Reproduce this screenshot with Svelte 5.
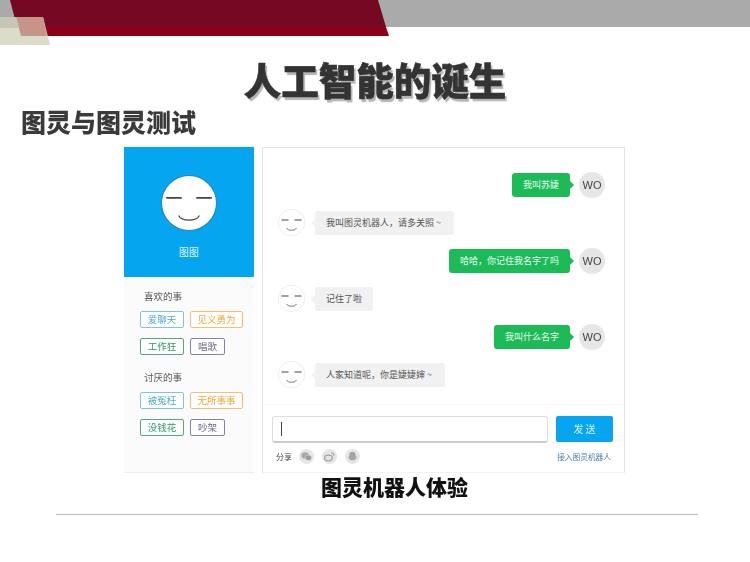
<script>
  const likes = [
    [["爱聊天", "blue"], ["见义勇为", "orange"]],
    [["工作狂", "green"], ["唱歌", "purple"]]
  ];
  const hates = [
    [["被冤枉", "blue"], ["无所事事", "orange"]],
    [["没钱花", "green"], ["吵架", "purple"]]
  ];
  const groups = [
    { title: "喜欢的事", rows: likes },
    { title: "讨厌的事", rows: hates }
  ];
  const messages = [
    { me: true, text: "我叫苏婕" },
    { me: false, text: "我叫图灵机器人，请多关照 ~\u2009" },
    { me: true, text: "哈哈，你记住我名字了吗" },
    { me: false, text: "记住了啦" },
    { me: true, text: "我叫什么名字" },
    { me: false, text: "人家知道呢，你是婕婕婶 ~\u2009" }
  ];
</script>

{#snippet face(size)}
  <svg class="face" width={size} height={size} viewBox="0 0 54 54">
    <circle cx="27" cy="27" r="26.5" fill="#fff" stroke="#ddd" />
    <path d="M7 22h14M33 22h14" stroke="#444" stroke-width="2.4" fill="none" />
    <path d="M17 38c3 6 17 6 20 0" stroke="#555" stroke-width="1.6" fill="none" />
  </svg>
{/snippet}

<div class="slide">
  <div class="banner">
    <svg width="750" height="46" viewBox="0 0 750 46">
      <rect width="750" height="27" fill="#aaaaaa" />
      <polygon points="10,0 378,0 386,27 17,27" fill="#750823" />
      <polygon points="17,27 386,27 389,36 21,36" fill="#8c0018" />
      <polygon points="0,17 43,17 50,45 0,45" fill="#dcdccb" />
      <polygon points="16,17 43,17 47,36 21,36" fill="#c4968a" />
      <polygon points="0,17 16,17 19,28 0,28" fill="#c6c6b4" />
    </svg>
  </div>

  <h1>人工智能的诞生</h1>
  <h2>图灵与图灵测试</h2>

  <div class="panel">
    <aside>
      <div class="profile">
        <svg class="bigface" width="56" height="56" viewBox="0 0 54 54">
          <circle cx="27" cy="27" r="26.5" fill="#fff" stroke="#1d84b8" />
          <path d="M5 22h15M34 22h15" stroke="#444" stroke-width="1.8" fill="none" />
          <path d="M17 39c3 6 17 6 20 0" stroke="#444" stroke-width="1.2" fill="none" />
        </svg>
        <span>图图</span>
      </div>
      <div class="groups">
        {#each groups as g}
          <div class="group">
            <div class="gtitle">{g.title}</div>
            {#each g.rows as row}
              <div class="tags">
                {#each row as t}
                  <span class="tag {t[1]}">{t[0]}</span>
                {/each}
              </div>
            {/each}
          </div>
        {/each}
      </div>
    </aside>

    <section class="chat">
      <div class="messages">
        {#each messages as m}
          {#if m.me}
            <div class="row me">
              <div class="bubble green">{m.text}</div>
              <div class="wo">WO</div>
            </div>
          {:else}
            <div class="row bot">
              {@render face(27)}
              <div class="bubble gray">{m.text}</div>
            </div>
          {/if}
        {/each}
      </div>
      <div class="composer">
        <div class="inputrow">
          <div class="input"><i></i></div>
          <button>发 送</button>
        </div>
        <div class="share">
          <span class="sharelabel">分享</span>
          <span class="icon">
            <svg width="15" height="15" viewBox="0 0 14 14">
              <circle cx="7" cy="7" r="7" fill="#e6e6e6" />
              <ellipse cx="5.7" cy="6" rx="3.5" ry="2.9" fill="#a9a9a9" />
              <ellipse cx="8.8" cy="8.2" rx="3" ry="2.5" fill="#9a9a9a" stroke="#e6e6e6" stroke-width=".5" />
            </svg>
          </span>
          <span class="icon">
            <svg width="15" height="15" viewBox="0 0 14 14">
              <circle cx="7" cy="7" r="7" fill="#e6e6e6" />
              <ellipse cx="6" cy="8.4" rx="3.6" ry="2.6" fill="none" stroke="#a4a4a4" stroke-width="1.2" />
              <path d="M8.6 3.8c1.6-.3 2.8 1 2.3 2.6" fill="none" stroke="#a4a4a4" stroke-width="1" />
            </svg>
          </span>
          <span class="icon">
            <svg width="15" height="15" viewBox="0 0 14 14">
              <circle cx="7" cy="7" r="7" fill="#e6e6e6" />
              <path d="M7 2.6c2 0 3 1.500 3 3.400l1 2.600-1 .3c-.3.900-.7 1.200-1 1.500H5c-.3-.3-.7-.6-1-1.500l-1-.3L4 6c0-1.900 1-3.400 3-3.400z" fill="#a4a4a4" />
            </svg>
          </span>
          <span class="link">接入图灵机器人</span>
        </div>
      </div>
    </section>
  </div>

  <div class="caption">图灵机器人体验</div>
  <hr />
</div>

<style>
  :global(body) {
    margin: 0;
    background: #fff;
  }
  .slide {
    position: relative;
    width: 750px;
    height: 562px;
    overflow: hidden;
    background: #fff;
    font-family: "Noto Sans CJK SC", "Liberation Sans", sans-serif;
    padding-top: 56px;
    box-sizing: border-box;
  }
  .banner {
    position: absolute;
    left: 0;
    top: 0;
    line-height: 0;
  }
  h1 {
    margin: 0;
    height: 45px;
    font-size: 37.5px;
    line-height: 45px;
    font-weight: 900;
    text-align: center;
    color: #333;
    -webkit-text-stroke: 0.6px #333;
    text-shadow: 2px 3px 1px #b4b4b4;
    filter: blur(0.4px);
  }
  h2 {
    margin: 6px 0 0 21px;
    height: 28px;
    font-size: 25px;
    line-height: 28px;
    font-weight: 900;
    color: #3a3a3a;
    filter: blur(0.4px);
  }
  .panel {
    display: flex;
    gap: 8px;
    margin: 12px 0 0 124px;
    width: 501px;
    height: 326px;
    filter: blur(0.5px);
  }
  aside {
    width: 130px;
    background: #fbfbfb;
    border-bottom: 1px solid #eee;
    box-sizing: border-box;
  }
  .profile {
    height: 130px;
    background: #06a5f0;
    display: flex;
    flex-direction: column;
    align-items: center;
    padding-top: 28px;
    box-sizing: border-box;
    color: #e8f6ff;
    font-size: 10px;
    line-height: 14px;
  }
  .profile span {
    margin-top: 14px;
  }
  .groups {
    padding: 12px 0 0 16px;
  }
  .group + .group {
    margin-top: 15px;
  }
  .gtitle {
    margin-left: 4px;
    font-size: 9.5px;
    line-height: 14px;
    color: #555;
    margin-bottom: 8px;
  }
  .tags {
    display: flex;
    gap: 6px;
    margin-bottom: 10px;
  }
  .tag {
    box-sizing: border-box;
    height: 17px;
    padding: 0;
    border: 1px solid;
    border-radius: 2px;
    font-size: 9.5px;
    line-height: 15px;
    text-align: center;
    white-space: nowrap;
    background: #fff;
  }
  .tag.blue { width: 44px; color: #4fa9cf; border-color: #7cc5dd; }
  .tag.orange { width: 53px; color: #eaa93f; border-color: #f1c170; }
  .tag.green { width: 44px; color: #2c9a62; border-color: #4fa97a; }
  .tag.purple { width: 35px; color: #6f6396; border-color: #8a7fab; }

  .chat {
    width: 363px;
    box-sizing: border-box;
    border: 1px solid #e4e4e4;
    border-bottom-color: #f2f2f2;
    display: flex;
    flex-direction: column;
    background: #fff;
  }
  .messages {
    height: 257px;
    padding: 23px 19px 0 15px;
    box-sizing: border-box;
    display: flex;
    flex-direction: column;
    gap: 11px;
    border-bottom: 1px solid #f6f6f6;
  }
  .row {
    display: flex;
    height: 27px;
    align-items: center;
  }
  .row.me {
    justify-content: flex-end;
  }
  .face {
    flex: none;
  }
  .bubble {
    position: relative;
    box-sizing: border-box;
    height: 24px;
    padding: 0 11px;
    border-radius: 3px;
    font-size: 9px;
    line-height: 24px;
    white-space: nowrap;
  }
  .bubble.green {
    background: #1dba58;
    color: #e9fff1;
    margin-right: 9px;
  }
  .bubble.gray {
    background: #f1f1f1;
    color: #555;
    margin-left: 10px;
  }
  .bubble::after {
    content: "";
    position: absolute;
    top: 8px;
    border: 4px solid transparent;
  }
  .bubble.green::after {
    left: 100%;
    border-left-color: #1dba58;
  }
  .bubble.gray::after {
    right: 100%;
    border-right-color: #f1f1f1;
  }
  .wo {
    width: 26px;
    height: 26px;
    border-radius: 50%;
    background: #e6e6e6;
    color: #444;
    font-family: "Liberation Sans", sans-serif;
    font-size: 11px;
    line-height: 26px;
    text-align: center;
  }
  .composer {
    padding: 11px 11px 0 9px;
  }
  .inputrow {
    display: flex;
    gap: 8px;
  }
  .input {
    width: 276px;
    height: 27px;
    box-sizing: border-box;
    border: 1px solid #ddd;
    border-bottom: 2px solid #ccc;
    border-radius: 3px;
    display: flex;
    align-items: center;
    padding-left: 8px;
    background: #fff;
  }
  .input i {
    display: block;
    width: 1px;
    height: 14px;
    background: #444;
  }
  button {
    width: 57px;
    height: 26px;
    border: 0;
    padding: 0;
    border-radius: 2px;
    background: #06a5f0;
    color: #d8f2ff;
    font-family: inherit;
    font-size: 10px;
    line-height: 26px;
  }
  .share {
    display: flex;
    align-items: center;
    margin-top: 6px;
    padding-left: 4px;
    height: 15px;
    gap: 8px;
  }
  .sharelabel {
    font-size: 8px;
    color: #444;
    margin-right: -1px;
  }
  .icon {
    line-height: 0;
  }
  .link {
    margin-left: auto;
    margin-right: 2px;
    font-size: 7.7px;
    color: #4a7fa8;
  }
  .caption {
    margin: 1px 0 0 321px;
    font-size: 21px;
    line-height: 24px;
    font-weight: 900;
    color: #111;
    filter: blur(0.3px);
  }
  hr {
    margin: 16px 0 0 56px;
    width: 642px;
    height: 1px;
    border: 0;
    background: #bbb;
  }
</style>
